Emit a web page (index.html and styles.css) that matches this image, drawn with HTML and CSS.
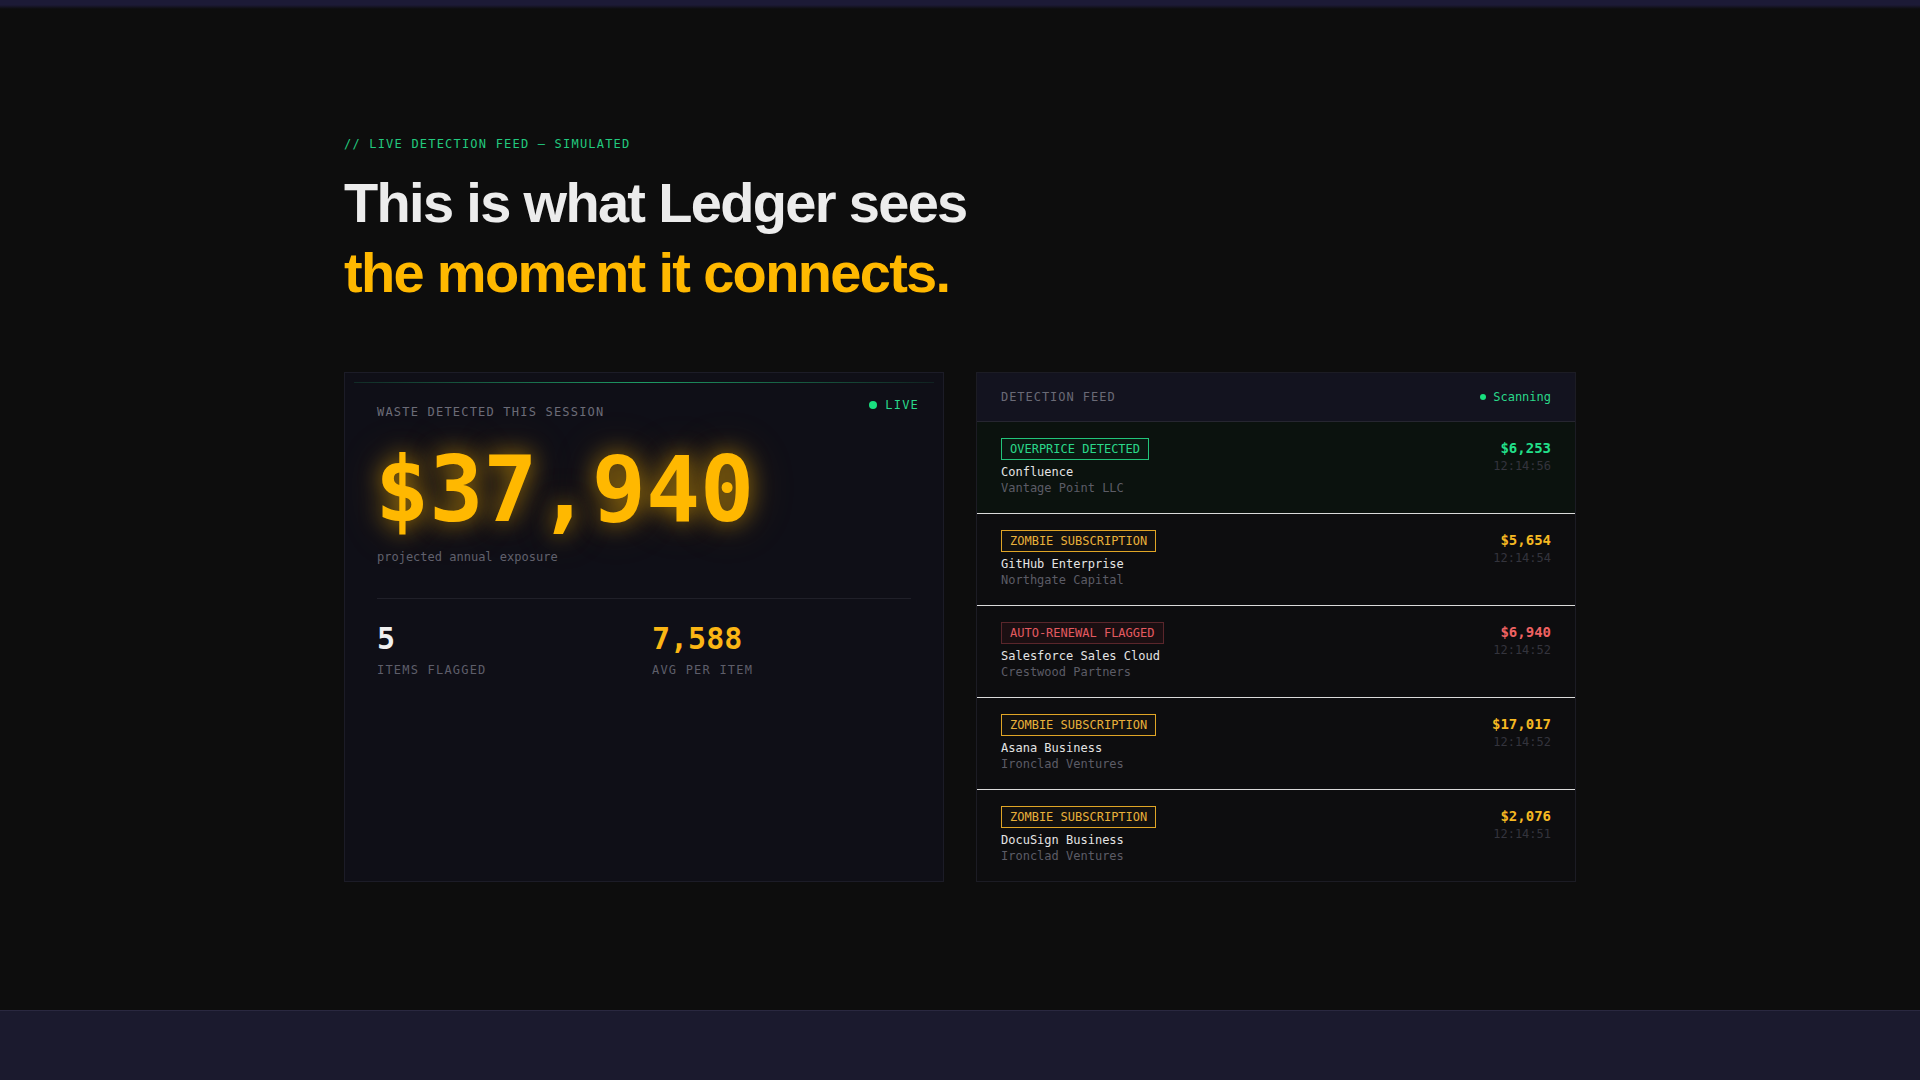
FILE: index.html
```html
<!DOCTYPE html>
<html lang="en">
<head>
  <meta charset="UTF-8">
  <meta name="viewport" content="width=device-width, initial-scale=1.0">
  <title>Ledger — Live Detection Feed</title>
  <link rel="stylesheet" href="styles.css">
</head>
<body>
  <div class="top-fade"></div>

  <section class="feed-section">
    <div class="wrap">
      <p class="eyebrow">// LIVE DETECTION FEED — SIMULATED</p>
      <h1 class="headline">This is what Ledger sees<br><span class="accent">the moment it connects.</span></h1>

      <div class="panels">
        <div class="waste-card">
          <div class="live-tag"><span class="live-dot"></span>LIVE</div>
          <p class="waste-label">WASTE DETECTED THIS SESSION</p>
          <div class="waste-total">$37,940</div>
          <p class="waste-sub">projected annual exposure</p>

          <div class="stats">
            <div class="stat">
              <div class="stat-value">5</div>
              <div class="stat-label">ITEMS FLAGGED</div>
            </div>
            <div class="stat">
              <div class="stat-value amber">7,588</div>
              <div class="stat-label">AVG PER ITEM</div>
            </div>
          </div>
        </div>

        <div class="feed-card">
          <div class="feed-head">
            <span class="feed-title">DETECTION FEED</span>
            <span class="scanning"><span class="scan-dot"></span>Scanning</span>
          </div>

          <div class="feed-row fresh">
            <div class="row-main">
              <span class="badge badge-green">OVERPRICE DETECTED</span>
              <div class="vendor">Confluence</div>
              <div class="client">Vantage Point LLC</div>
            </div>
            <div class="row-side">
              <div class="amount green">$6,253</div>
              <div class="time">12:14:56</div>
            </div>
          </div>

          <div class="feed-row">
            <div class="row-main">
              <span class="badge badge-amber">ZOMBIE SUBSCRIPTION</span>
              <div class="vendor">GitHub Enterprise</div>
              <div class="client">Northgate Capital</div>
            </div>
            <div class="row-side">
              <div class="amount amber">$5,654</div>
              <div class="time">12:14:54</div>
            </div>
          </div>

          <div class="feed-row">
            <div class="row-main">
              <span class="badge badge-red">AUTO-RENEWAL FLAGGED</span>
              <div class="vendor">Salesforce Sales Cloud</div>
              <div class="client">Crestwood Partners</div>
            </div>
            <div class="row-side">
              <div class="amount red">$6,940</div>
              <div class="time">12:14:52</div>
            </div>
          </div>

          <div class="feed-row">
            <div class="row-main">
              <span class="badge badge-amber">ZOMBIE SUBSCRIPTION</span>
              <div class="vendor">Asana Business</div>
              <div class="client">Ironclad Ventures</div>
            </div>
            <div class="row-side">
              <div class="amount amber">$17,017</div>
              <div class="time">12:14:52</div>
            </div>
          </div>

          <div class="feed-row">
            <div class="row-main">
              <span class="badge badge-amber">ZOMBIE SUBSCRIPTION</span>
              <div class="vendor">DocuSign Business</div>
              <div class="client">Ironclad Ventures</div>
            </div>
            <div class="row-side">
              <div class="amount amber">$2,076</div>
              <div class="time">12:14:51</div>
            </div>
          </div>
        </div>
      </div>
    </div>
  </section>

  <section class="next-section"></section>
</body>
</html>
```

FILE: styles.css
```css
body {
  margin: 0;
  background-color: #0d0d0d;
  color: #ececec;
  font-family: "Liberation Sans", Arial, sans-serif;
}

.top-fade {
  height: 9px;
  background: linear-gradient(#1c1a36 55%, #0d0d0d);
}

.feed-section {
  padding: 127px 0 128px;
}

.wrap {
  max-width: 1232px;
  margin: 0 auto;
}

.eyebrow {
  margin: 0 0 16px;
  font-family: "DejaVu Sans Mono", monospace;
  font-size: 12px;
  line-height: 16px;
  letter-spacing: 0.1em;
  color: #22c97e;
}

.headline {
  margin: 0 0 64px;
  font-size: 56px;
  line-height: 70px;
  font-weight: 700;
  letter-spacing: -0.03em;
  color: #ececec;
}

.headline .accent {
  color: #ffb800;
}

.panels {
  display: grid;
  grid-template-columns: 1fr 1fr;
  gap: 32px;
}

/* left panel */

.waste-card {
  position: relative;
  background-color: #0f0f17;
  border: 1px solid #1c1c27;
  padding: 31px 32px 30px;
  font-family: "DejaVu Sans Mono", monospace;
}

.waste-card::before {
  content: "";
  position: absolute;
  top: 9px;
  left: 9px;
  right: 9px;
  height: 1px;
  background: linear-gradient(90deg, rgba(34, 201, 126, 0.15), rgba(34, 201, 126, 0.75) 50%, rgba(34, 201, 126, 0.1));
}

.live-tag {
  position: absolute;
  top: 24px;
  right: 24px;
  display: flex;
  align-items: center;
  gap: 8px;
  font-size: 12px;
  line-height: 16px;
  letter-spacing: 0.1em;
  color: #2ad88a;
}

.live-dot {
  width: 8px;
  height: 8px;
  border-radius: 50%;
  background-color: #19e07f;
}

.waste-label {
  margin: 0 0 20px;
  font-size: 12px;
  line-height: 16px;
  letter-spacing: 0.1em;
  color: #6c6c78;
}

.waste-total {
  margin-left: -2px;
  font-size: 90px;
  line-height: 1.1;
  font-weight: 700;
  color: #ffb800;
  text-shadow: 0 0 22px rgba(255, 184, 0, 0.55), 0 0 46px rgba(255, 170, 0, 0.25);
}

.waste-sub {
  margin: 10px 0 33px;
  font-size: 12px;
  line-height: 16px;
  color: #61616d;
}

.stats {
  display: grid;
  grid-template-columns: 1fr 1fr;
  gap: 16px;
  border-top: 1px solid #202029;
  padding-top: 21px;
}

.stat-value {
  font-size: 30px;
  line-height: 38px;
  font-weight: 700;
  color: #f0f0f0;
}

.stat-value.amber {
  color: #fbb614;
}

.stat-label {
  margin-top: 4px;
  font-size: 12px;
  line-height: 16px;
  letter-spacing: 0.1em;
  color: #5e5e6a;
}

/* right panel */

.feed-card {
  background-color: #0d0d0f;
  border: 1px solid #1c1c24;
  font-family: "DejaVu Sans Mono", monospace;
}

.feed-head {
  display: flex;
  justify-content: space-between;
  align-items: center;
  padding: 16px 24px;
  background-color: #13131f;
  border-bottom: 1px solid #262630;
  font-size: 12px;
  line-height: 16px;
}

.feed-title {
  letter-spacing: 0.08em;
  color: #6a6a76;
}

.scanning {
  display: flex;
  align-items: center;
  gap: 7px;
  color: #2ad88a;
}

.scan-dot {
  width: 6px;
  height: 6px;
  border-radius: 50%;
  background-color: #19e07f;
}

.feed-row {
  display: flex;
  justify-content: space-between;
  align-items: flex-start;
  padding: 16px 24px 17px;
  border-bottom: 1px solid #dadada;
  font-size: 12px;
  line-height: 16px;
}

.feed-row:last-child {
  border-bottom: none;
}

.feed-row.fresh {
  background-color: #0b120e;
}

.badge {
  display: inline-block;
  padding: 3px 8px;
  border: 1px solid;
  font-size: 12px;
  line-height: 14px;
  margin-bottom: 4px;
}

.badge-green {
  color: #2ad88a;
  border-color: #22c47a;
  background-color: rgba(34, 196, 122, 0.04);
}

.badge-amber {
  color: #e9b03a;
  border-color: #e0a526;
  background-color: rgba(224, 165, 38, 0.03);
}

.badge-red {
  color: #e45a60;
  border-color: #5a262b;
  background-color: #1b0f12;
}

.vendor {
  color: #e4e4e4;
}

.client {
  color: #5c5c66;
}

.row-side {
  display: flex;
  flex-direction: column;
  align-items: flex-end;
}

.amount {
  font-size: 14px;
  line-height: 20px;
  font-weight: 700;
}

.amount.green { color: #22e08a; }
.amount.amber { color: #f5b822; }
.amount.red { color: #ef6262; }

.time {
  color: #34343d;
}

.next-section {
  height: 70px;
  background-color: #1b1a2e;
  border-top: 1px solid #2a2840;
}
```
